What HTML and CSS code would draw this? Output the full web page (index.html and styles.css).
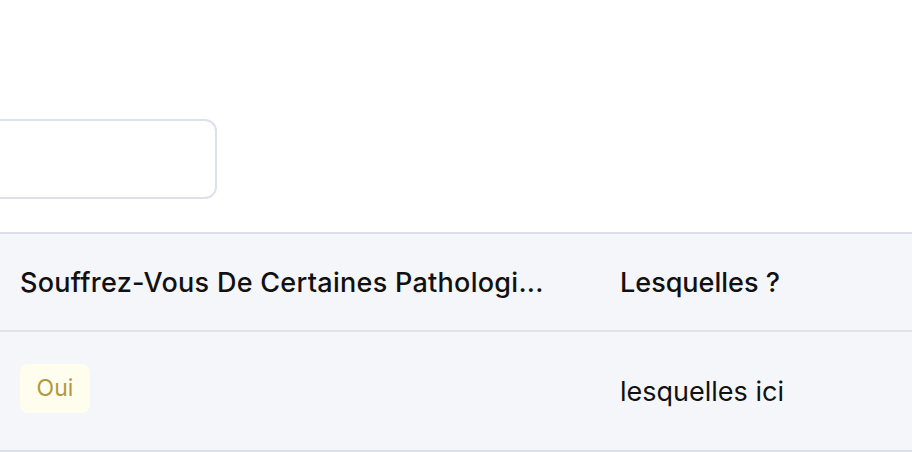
FILE: index.html
```html
<!DOCTYPE html>
<html lang="fr">
<head>
<meta charset="utf-8">
<link rel="stylesheet" href="styles.css">
</head>
<body>
<div class="top">
  <div class="search"></div>
</div>
<div class="table">
  <div class="row head">
    <div class="cell">Souffrez-Vous De Certaines Pathologi...</div>
    <div class="cell">Lesquelles ?</div>
  </div>
  <div class="row body">
    <div class="cell"><span class="badge">Oui</span></div>
    <div class="cell">lesquelles ici</div>
  </div>
</div>
</body>
</html>
```

FILE: styles.css
```css
html, body {
  margin: 0;
  padding: 0;
  background: #ffffff;
  font-family: Inter, "Noto Sans", sans-serif;
  color: #111111;
  overflow: hidden;
}
.top {
  height: 232px;
  box-sizing: border-box;
  padding-top: 119px;
}
.search {
  margin-left: -200px;
  width: 417px;
  height: 80px;
  box-sizing: border-box;
  border: 2px solid #dde1ec;
  border-radius: 12px;
  background: #fff;
}
.table {
  border-top: 2px solid #dadfea;
  background: #f5f6fa;
}
.row {
  display: grid;
  grid-template-columns: 600px 1fr;
}
.head {
  height: 96px;
  border-bottom: 2px solid #e1e2e5;
  font-size: 27px;
  font-weight: 500;
}
.head .cell:first-child {
  letter-spacing: 0.28px;
}
.body {
  height: 118px;
  border-bottom: 2px solid #dadfea;
  font-size: 27px;
}
.cell {
  padding-left: 20px;
  display: flex;
  align-items: center;
}
.badge {
  display: inline-flex;
  align-items: center;
  justify-content: center;
  width: 70px;
  height: 49px;
  background: #fefdee;
  color: #b09a3c;
  border-radius: 8px;
  font-size: 23px;
  margin-top: -6px;
}
```
